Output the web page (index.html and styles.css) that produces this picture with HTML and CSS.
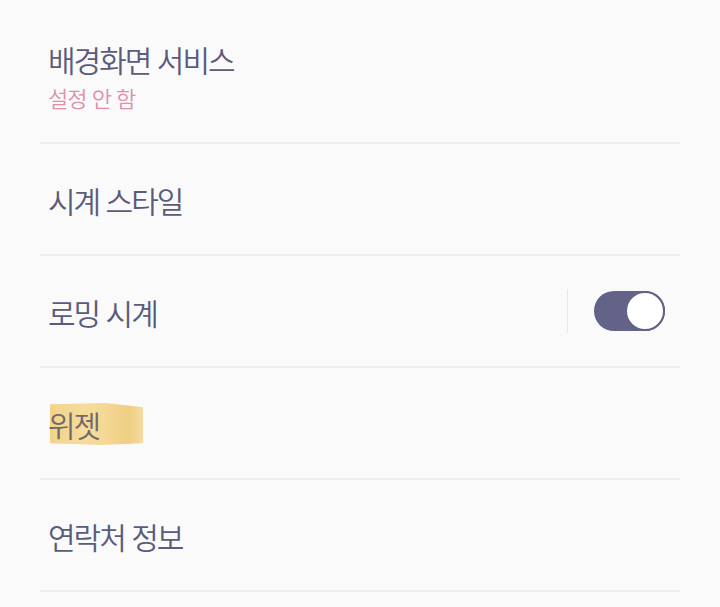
FILE: index.html
```html
<!DOCTYPE html>
<html lang="ko">
<head>
<meta charset="utf-8">
<link rel="stylesheet" href="styles.css">
</head>
<body>
<div class="list">
  <div class="row row-first">
    <div class="title">배경화면 서비스</div>
    <div class="sub">설정 안 함</div>
  </div>
  <div class="row">
    <div class="title">시계 스타일</div>
  </div>
  <div class="row row-toggle">
    <div class="title">로밍 시계</div>
    <div class="ctrl">
      <span class="sep"></span>
      <span class="switch"><span class="knob"></span></span>
    </div>
  </div>
  <div class="row">
    <div class="title"><span class="mark">위젯</span></div>
  </div>
  <div class="row">
    <div class="title">연락처 정보</div>
  </div>
</div>
</body>
</html>
```

FILE: styles.css
```css
html, body {
  margin: 0;
  padding: 0;
  background: #fafafb;
}
body {
  font-family: "Noto Sans CJK KR", "Noto Sans", sans-serif;
  width: 720px;
  height: 607px;
  overflow: hidden;
}
.list {
  padding: 0 40px;
}
.row {
  height: 110px;
  border-bottom: 2px solid #eeeef1;
  display: flex;
  align-items: center;
  padding-left: 8px;
  box-sizing: content-box;
}
.row-first {
  height: 142px;
  flex-direction: column;
  align-items: flex-start;
  justify-content: flex-start;
}
.row-first .title {
  margin-top: 37px;
}
.title {
  font-size: 30px;
  font-weight: 350;
  line-height: 40px;
  color: #5b5b7c;
  letter-spacing: -2px;
  padding-top: 2px;
}
.sub {
  font-size: 22px;
  font-weight: 350;
  line-height: 30px;
  color: #e28ea8;
  letter-spacing: -1px;
  margin-top: 3px;
}
.row-toggle {
  justify-content: space-between;
}
.ctrl {
  display: flex;
  align-items: center;
  padding-right: 15px;
}
.sep {
  width: 1px;
  height: 44px;
  background: #e6e6ea;
  margin-right: 26px;
}
.switch {
  position: relative;
  width: 71px;
  height: 40px;
  border-radius: 20px;
  background: #63638a;
  display: block;
}
.knob {
  position: absolute;
  right: 0;
  top: 0;
  width: 36px;
  height: 36px;
  border-radius: 50%;
  background: #fff;
  border: 2px solid #63638a;
}
.mark {
  position: relative;
  display: inline-block;
  z-index: 0;
  color: #706a6c;
}
.mark::before {
  content: "";
  position: absolute;
  left: 2px;
  top: -1px;
  width: 93px;
  height: 42px;
  z-index: -1;
  background: linear-gradient(90deg, #f2d38a 0%, #f6db9c 35%, #f4d894 60%, #efcd83 85%, #f5dca2 100%);
  clip-path: polygon(0 3%, 60% 0, 100% 10%, 100% 96%, 55% 100%, 0 96%);
}
```
